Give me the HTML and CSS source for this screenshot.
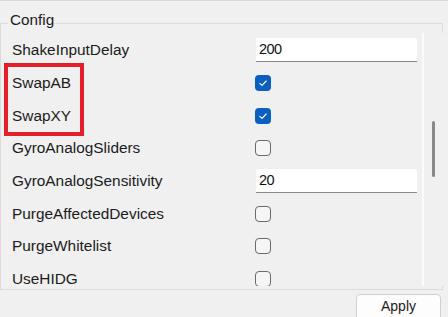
FILE: index.html
```html
<!DOCTYPE html>
<html>
<head>
<meta charset="utf-8">
<link rel="stylesheet" href="styles.css">
</head>
<body>
<div class="topline"></div>
<div class="group">
  <span class="legend">Config</span>
  <div class="scroll">
    <div class="list">
      <div class="row"><span class="label">ShakeInputDelay</span><div class="field">200</div></div>
      <div class="row"><span class="label">SwapAB</span><span class="cb on"><svg viewBox="0 0 16 16" width="16" height="16"><polyline points="4.8,8.3 7,10.4 11.2,6" fill="none" stroke="#fff" stroke-width="1.1" stroke-linecap="round" stroke-linejoin="round"/></svg></span></div>
      <div class="row"><span class="label">SwapXY</span><span class="cb on"><svg viewBox="0 0 16 16" width="16" height="16"><polyline points="4.8,8.3 7,10.4 11.2,6" fill="none" stroke="#fff" stroke-width="1.1" stroke-linecap="round" stroke-linejoin="round"/></svg></span></div>
      <div class="row"><span class="label">GyroAnalogSliders</span><span class="cb"></span></div>
      <div class="row"><span class="label">GyroAnalogSensitivity</span><div class="field">20</div></div>
      <div class="row"><span class="label">PurgeAffectedDevices</span><span class="cb"></span></div>
      <div class="row"><span class="label">PurgeWhitelist</span><span class="cb"></span></div>
      <div class="row"><span class="label">UseHIDG</span><span class="cb"></span></div>
    </div>
    <div class="divider"></div>
    <div class="track"><div class="thumb"></div></div>
  </div>
</div>
<div class="footer"><button class="btn">Apply</button></div>
<div class="highlight"></div>
</body>
</html>
```
FILE: styles.css
```css
html, body {
  margin: 0;
  padding: 0;
}
body {
  width: 448px;
  height: 317px;
  overflow: hidden;
  background: #f0f0f0;
  font-family: "Liberation Sans", Arial, sans-serif;
  color: #1b1b1b;
  position: relative;
}
.topline {
  height: 1px;
  background: #d9d9d9;
}
.group {
  position: relative;
  margin-top: 22px;
  width: 443px;
  box-sizing: border-box;
  border: 1px solid #dcdcdc;
  padding: 9px 0 3px 0;
}
.legend {
  position: absolute;
  left: 7px;
  top: -13px;
  padding-left: 2px;
  background: #f0f0f0;
  font-size: 15.3px;
  line-height: 18px;
}
.scroll {
  display: flex;
  height: 253px;
  overflow: hidden;
  margin-right: -2px;
  background: #f0f0f0;
}
.list {
  width: 421px;
  flex: none;
  padding-top: 1px;
}
.row {
  height: 32.7px;
  display: flex;
  align-items: center;
}
.label {
  width: 254px;
  flex: none;
  box-sizing: border-box;
  padding-left: 11px;
  font-size: 15.4px;
  white-space: nowrap;
}
.field {
  margin-left: 1px;
  width: 161px;
  height: 24px;
  box-sizing: border-box;
  background: #ffffff;
  border-bottom: 1px solid #8a8a8a;
  border-radius: 2px 2px 0 0;
  padding-left: 3px;
  font-size: 14.5px;
  letter-spacing: -0.6px;
  line-height: 23px;
  color: #111;
}
.cb {
  width: 16px;
  height: 16px;
  box-sizing: border-box;
  border: 1px solid #6a6a6a;
  border-radius: 4px;
  background: #f5f5f5;
  display: block;
}
.cb.on {
  border: none;
  background: #0a5fc0;
}
.cb svg {
  display: block;
}
.divider {
  width: 2px;
  flex: none;
  background: #fbfbfb;
}
.track {
  flex: 1;
  padding-left: 8px;
}
.thumb {
  width: 3px;
  height: 56px;
  margin-top: 88px;
  background: #8a8a8a;
  border-radius: 2px;
}
.footer {
  display: flex;
  justify-content: flex-end;
  padding-right: 7px;
  margin-top: 4px;
}
.btn {
  width: 85px;
  height: 28px;
  box-sizing: border-box;
  border: 1px solid #d0d0d0;
  border-radius: 4px;
  background: #fdfdfd;
  font-family: "Liberation Sans", Arial, sans-serif;
  font-size: 14px;
  line-height: 15px;
  color: #1b1b1b;
  padding: 4px 0 0 0;
  display: flex;
  justify-content: center;
  align-items: flex-start;
}
.highlight {
  position: absolute;
  left: 4px;
  top: 63px;
  width: 80px;
  height: 73px;
  box-sizing: border-box;
  border: 4px solid #e3202a;
}
```
